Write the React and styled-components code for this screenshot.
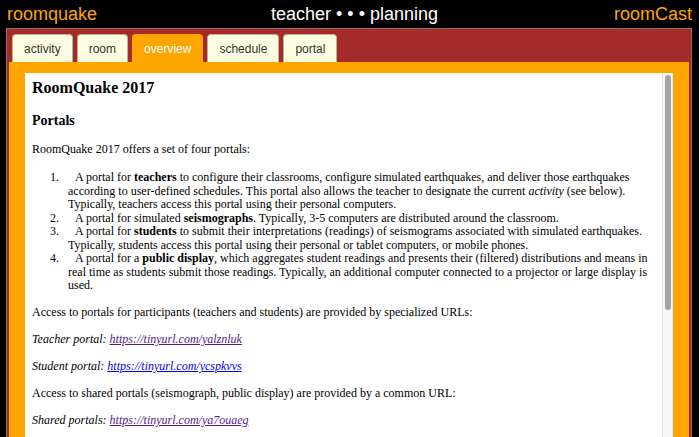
import React from "react";
import styled, { createGlobalStyle } from "styled-components";

const Global = createGlobalStyle`
  html, body { margin: 0; padding: 0; background: #000; overflow: hidden; }
  #root { height: 100vh; }
`;

const Page = styled.div`
  height: calc(100vh + 12px);
  display: flex;
  flex-direction: column;
  background: #000;
  font-family: "Liberation Sans", Arial, sans-serif;
`;

const Header = styled.header`
  height: 28px;
  flex: none;
  display: grid;
  grid-template-columns: 1fr auto 1fr;
  align-items: center;
  padding: 0 7px;
  font-size: 18px;
  line-height: 28px;
`;

const Brand = styled.div`
  color: #ffa500;
  justify-self: ${(p) => (p.$right ? "end" : "start")};
  margin-top: -1px;
`;

const Title = styled.div`
  color: #fff;
  margin-left: 10px;
  margin-top: -1px;
`;

const Panel = styled.div`
  flex: 1;
  min-height: 0;
  margin: 0 7px 0 6px;
  background: #a52a2a;
  border: 1px solid #8d6d6d;
  border-bottom: none;
  padding: 5px 2px 0 2px;
  display: flex;
  flex-direction: column;
`;

const TabBar = styled.nav`
  display: flex;
  gap: 4px;
  padding-left: 3px;
  flex: none;
`;

const Tab = styled.div`
  height: 28px;
  box-sizing: border-box;
  padding: 0 11px;
  display: flex;
  align-items: center;
  font-size: 12px;
  color: ${(p) => (p.$active ? "#fff" : "#333")};
  background: ${(p) => (p.$active ? "#ffa500" : "#fffde1")};
  border: 1px solid ${(p) => (p.$active ? "#ffa500" : "#b9b2a0")};
  border-bottom: none;
  border-radius: 4px 4px 0 0;
`;

const Stage = styled.div`
  flex: 1;
  min-height: 0;
  background: #ffa500;
  padding: 11px 16px 12px 16px;
  display: flex;
`;

const Doc = styled.div`
  flex: 1;
  min-height: 0;
  background: #fff;
  display: flex;
  overflow: hidden;
`;

const Body = styled.div`
  flex: 1;
  min-width: 0;
  overflow: hidden;
  padding: 6px 7px 0 7px;
  font-family: "Liberation Serif", "Times New Roman", serif;
  font-size: 12px;
  line-height: 13.5px;
  color: #000;
`;

const ScrollTrack = styled.div`
  flex: none;
  width: 9px;
  background: #f7f7f7;
  border-left: 1px solid #e2e2e2;
  border-right: 1px solid #ececec;
`;

const ScrollThumb = styled.div`
  width: 6px;
  height: 235px;
  margin: 2px 0 0 2px;
  border-radius: 3px;
  background: #a3a3a3;
`;

const H1 = styled.h1`
  font-size: 16px;
  line-height: 18px;
  margin: 0 0 16px 0;
`;

const H2 = styled.h2`
  font-size: 14px;
  line-height: 16px;
  margin: 0 0 12px 0;
`;

const P = styled.p`
  margin: 13.5px 0;
  font-style: ${(p) => (p.$italic ? "italic" : "normal")};
`;

const List = styled.ol`
  margin: 15px 0 13px 0;
  padding-left: 36px;

  & > li::marker {
    content: counter(list-item) ".\\00a0\\00a0\\00a0";
  }
  & > li::before {
    content: "";
    display: inline-block;
    width: 7px;
  }
`;

const Link = styled.a`
  color: ${(p) => (p.$visited ? "#551a8b" : "#0000ee")};
  text-decoration: underline;
`;

const tabs = ["activity", "room", "overview", "schedule", "portal"];

export default function App() {
  return (
    <>
      <Global />
      <Page>
        <Header>
          <Brand>roomquake</Brand>
          <Title>teacher • • • planning</Title>
          <Brand $right>roomCast</Brand>
        </Header>
        <Panel>
          <TabBar>
            {tabs.map((t) => (
              <Tab key={t} $active={t === "overview"}>
                {t}
              </Tab>
            ))}
          </TabBar>
          <Stage>
            <Doc>
              <Body>
                <H1>RoomQuake 2017</H1>
                <H2>Portals</H2>
                <P>RoomQuake 2017 offers a set of four portals:</P>
                <List>
                  <li>
                    A portal for <b>teachers</b> to configure their classrooms, configure simulated
                    earthquakes, and deliver those earthquakes according to user-defined schedules.
                    This portal also allows the teacher to designate the current <i>activity</i> (see
                    below). Typically, teachers access this portal using their personal computers.
                  </li>
                  <li>
                    A portal for simulated <b>seismographs</b>. Typically, 3-5 computers are
                    distributed around the classroom.
                  </li>
                  <li>
                    A portal for <b>students</b> to submit their interpretations (readings) of
                    seismograms associated with simulated earthquakes. Typically, students access this
                    portal using their personal or tablet computers, or mobile phones.
                  </li>
                  <li>
                    A portal for a <b>public display</b>, which aggregates student readings and
                    presents their (filtered) distributions and means in real time as students submit
                    those readings. Typically, an additional computer connected to a projector or
                    large display is used.
                  </li>
                </List>
                <P>
                  Access to portals for participants (teachers and students) are provided by
                  specialized URLs:
                </P>
                <P $italic>
                  Teacher portal: <Link $visited href="#">https://tinyurl.com/yalznluk</Link>
                </P>
                <P $italic>
                  Student portal: <Link href="#">https://tinyurl.com/ycspkvvs</Link>
                </P>
                <P>
                  Access to shared portals (seismograph, public display) are provided by a common URL:
                </P>
                <P $italic>
                  Shared portals: <Link $visited href="#">https://tinyurl.com/ya7ouaeg</Link>
                </P>
              </Body>
              <ScrollTrack>
                <ScrollThumb />
              </ScrollTrack>
            </Doc>
          </Stage>
        </Panel>
      </Page>
    </>
  );
}
